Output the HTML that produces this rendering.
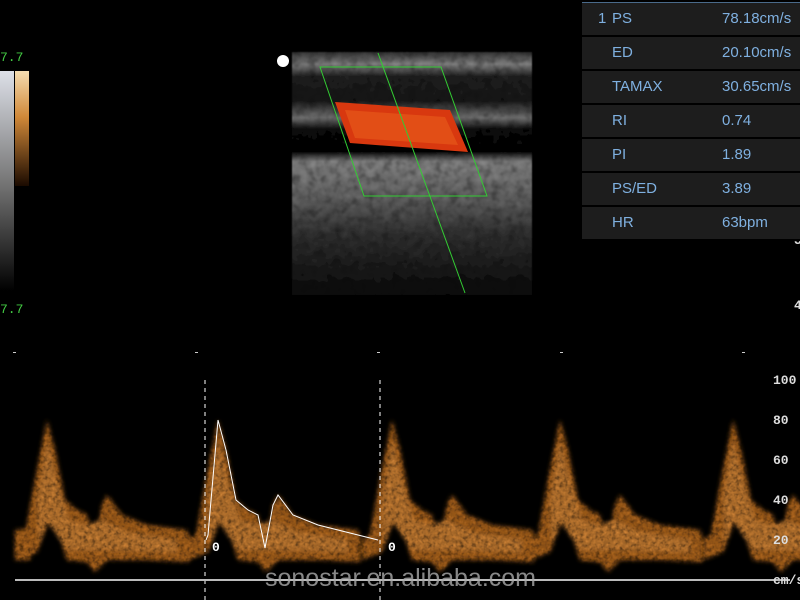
<!DOCTYPE html>
<html><head><meta charset="utf-8"><style>
html,body{margin:0;padding:0;background:#000;width:800px;height:600px;overflow:hidden;font-family:"Liberation Sans",sans-serif}
.t{position:absolute;left:582px;top:2px;width:218px;background:#000;border-top:1px solid #4a6a8a}
.r{height:32px;margin-bottom:2px;background:#1d1d1d;position:relative;color:#7fb0e0;font-size:15px;line-height:32px}
.r span{position:absolute}
.l{left:30px}.v{left:140px}
.m{position:absolute;font-family:"Liberation Mono",monospace;color:#ddd;font-size:13px;font-weight:bold}
</style></head><body>
<svg width="800" height="600" style="position:absolute;left:0;top:0">
<defs>
<linearGradient id="gg" x1="0" y1="0" x2="0" y2="1"><stop offset="0" stop-color="#dde0e8"/><stop offset="0.5" stop-color="#777"/><stop offset="1" stop-color="#000"/></linearGradient>
<linearGradient id="og" x1="0" y1="0" x2="0" y2="1"><stop offset="0" stop-color="#f5dcb0"/><stop offset="0.4" stop-color="#d08838"/><stop offset="1" stop-color="#1a0a00"/></linearGradient>
<linearGradient id="us" x1="0" y1="0" x2="0" y2="1">
<stop offset="0" stop-color="#333"/><stop offset="0.05" stop-color="#888"/><stop offset="0.1" stop-color="#222"/><stop offset="0.2" stop-color="#181818"/><stop offset="0.27" stop-color="#777"/><stop offset="0.32" stop-color="#0a0a0a"/><stop offset="0.41" stop-color="#050505"/><stop offset="0.45" stop-color="#888"/><stop offset="0.6" stop-color="#666"/><stop offset="0.75" stop-color="#333"/><stop offset="1" stop-color="#0a0a0a"/></linearGradient>
<filter id="n"><feTurbulence type="fractalNoise" baseFrequency="0.12" numOctaves="2" result="t"/><feColorMatrix in="t" type="saturate" values="0" result="g"/><feComposite in="SourceGraphic" in2="g" operator="arithmetic" k1="1.0" k2="0.5" k3="0" k4="0"/><feGaussianBlur stdDeviation="0.6"/></filter>
<filter id="b"><feGaussianBlur stdDeviation="2" result="bl"/><feTurbulence type="fractalNoise" baseFrequency="0.25" numOctaves="2" result="t"/><feColorMatrix in="t" type="saturate" values="0" result="g"/><feComposite in="bl" in2="g" operator="arithmetic" k1="1.4" k2="0.35" k3="0" k4="0"/></filter>
<g id="cyc">
<path d="M-30,540 L-22,535 L-12,480 L0,420 L8,450 L18,500 L30,510 L40,515 L47,548 L55,505 L60,495 L75,515 L100,525 L140,530 L142,536 L142,562 L100,560 L60,560 L48,572 L40,562 L20,560 L5,512 L-10,552 L-30,560 Z" fill="#a8621e"/>
<path d="M-10,500 L0,440 L10,480 L22,520 L40,525 L55,520 L80,532 L130,540 L130,552 L60,550 L20,550 L0,520 L-8,545 Z" fill="#c27a30"/>
</g>
</defs>
<rect x="0" y="71" width="14" height="220" fill="url(#gg)"/>
<rect x="15" y="71" width="14" height="115" fill="url(#og)"/>
<rect x="292" y="52" width="240" height="243" fill="url(#us)" filter="url(#n)"/>
<polygon points="335,102 450,110 468,152 350,143" fill="#d8380f"/>
<polygon points="345,110 445,117 458,145 355,138" fill="#f06a20" opacity="0.45"/>
<polygon points="320,67 441,67 487,196 364,196" fill="none" stroke="#3c3" stroke-width="1"/>
<line x1="378" y1="53" x2="465" y2="293" stroke="#3c3" stroke-width="1"/>
<circle cx="283" cy="61" r="6" fill="#fff"/>
<g filter="url(#b)">
<path d="M15,530 L35,528 L30,560 L15,560Z" fill="#a8621e"/>
<use href="#cyc" x="47"/><use href="#cyc" x="218"/><use href="#cyc" x="392"/><use href="#cyc" x="560"/><use href="#cyc" x="733"/>
</g>
<path d="M206,540 L208,535 L218,420 L226,450 L236,500 L248,510 L258,515 L265,548 L273,505 L278,495 L293,515 L318,525 L378,540" fill="none" stroke="#fff" stroke-width="1"/>
<line x1="205" y1="380" x2="205" y2="600" stroke="#fff" stroke-dasharray="4,4"/>
<line x1="380" y1="380" x2="380" y2="600" stroke="#fff" stroke-dasharray="4,4"/>
<line x1="15" y1="580" x2="790" y2="580" stroke="#bbb" stroke-width="2"/>
<g fill="#ccc"><rect x="13" y="352" width="3" height="1"/><rect x="195" y="352" width="3" height="1"/><rect x="377" y="352" width="3" height="1"/><rect x="560" y="352" width="3" height="1"/><rect x="742" y="352" width="3" height="1"/></g>
</svg>
<div class="m" style="left:0;top:50px;color:#4c4;font-weight:normal">7.7</div>
<div class="m" style="left:0;top:302px;color:#4c4;font-weight:normal">7.7</div>
<div class="m" style="left:212px;top:540px;color:#fff">0</div>
<div class="m" style="left:388px;top:540px;color:#fff">0</div>
<div class="m" style="left:773px;top:373px">100</div>
<div class="m" style="left:773px;top:413px">80</div>
<div class="m" style="left:773px;top:453px">60</div>
<div class="m" style="left:773px;top:493px">40</div>
<div class="m" style="left:773px;top:533px">20</div>
<div class="m" style="left:773px;top:573px">cm/s</div>
<div class="m" style="left:794px;top:233px">3</div>
<div class="m" style="left:794px;top:298px">4</div>
<div style="position:absolute;left:265px;top:564px;font-size:25px;color:rgba(170,170,170,0.8)">sonostar.en.alibaba.com</div>
<div class="t">
<div class="r"><span style="left:16px">1</span><span class="l">PS</span><span class="v">78.18cm/s</span></div>
<div class="r"><span class="l">ED</span><span class="v">20.10cm/s</span></div>
<div class="r"><span class="l">TAMAX</span><span class="v">30.65cm/s</span></div>
<div class="r"><span class="l">RI</span><span class="v">0.74</span></div>
<div class="r"><span class="l">PI</span><span class="v">1.89</span></div>
<div class="r"><span class="l">PS/ED</span><span class="v">3.89</span></div>
<div class="r"><span class="l">HR</span><span class="v">63bpm</span></div>
</div>
</body></html>
